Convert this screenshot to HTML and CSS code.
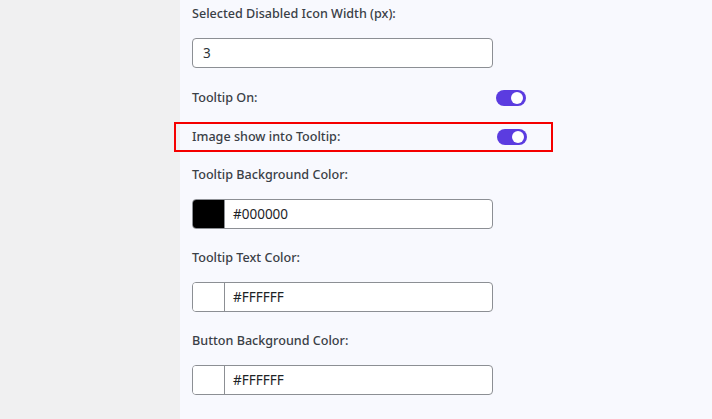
FILE: index.html
```html
<!DOCTYPE html>
<html>
<head>
<meta charset="utf-8">
<link rel="stylesheet" href="styles.css">
</head>
<body>
<div class="page">
  <aside class="side"></aside>
  <main class="panel">
    <div class="field">
      <div class="label">Selected Disabled Icon Width (px):</div>
      <div class="input"><span>3</span></div>
    </div>
    <div class="toggle-row first">
      <div class="label">Tooltip On:</div>
      <span class="toggle"><span class="knob"></span></span>
    </div>
    <div class="highlight">
      <div class="toggle-row">
        <div class="label">Image show into Tooltip:</div>
        <span class="toggle"><span class="knob"></span></span>
      </div>
    </div>
    <div class="field after-box">
      <div class="label">Tooltip Background Color:</div>
      <div class="input color"><span class="swatch black"></span><span class="val">#000000</span></div>
    </div>
    <div class="field">
      <div class="label">Tooltip Text Color:</div>
      <div class="input color"><span class="swatch"></span><span class="val">#FFFFFF</span></div>
    </div>
    <div class="field">
      <div class="label">Button Background Color:</div>
      <div class="input color"><span class="swatch"></span><span class="val">#FFFFFF</span></div>
    </div>
  </main>
</div>
</body>
</html>
```
FILE: styles.css
```css
* { box-sizing: border-box; }
html, body { margin: 0; padding: 0; }
body {
  font-family: "Noto Sans", "Open Sans", sans-serif;
  font-size: 13px;
  color: #3c434a;
  background: #f0f0f1;
}
.page { display: flex; height: 419px; overflow: hidden; }
.side { width: 180px; flex: none; background: #f0f0f1; }
.panel {
  flex: 1;
  background: #f8f9fe;
  padding: 4px 0 0 12px;
}
.label {
  line-height: 20px;
  height: 20px;
  white-space: nowrap;
  font-size: 12.6px;
  font-weight: 500;
  color: #3a4046;
}
.field { width: 301px; margin-bottom: 19px; }
.field .label { margin-bottom: 14px; }
.input {
  height: 30px;
  border: 1px solid #8c8f94;
  border-radius: 4px;
  background: #fff;
  display: flex;
  align-items: center;
  padding: 0 10px;
  color: #2c3338;
  font-size: 13.5px;
}
.input.color { padding: 0; overflow: hidden; }
.swatch {
  width: 32px;
  height: 100%;
  border-right: 1px solid #8c8f94;
  background: #fff;
  flex: none;
}
.swatch.black { background: #000; }
.val { padding-left: 8px; color: #1d2327; }
.field:first-child { margin-bottom: 20px; }
.toggle-row {
  width: 334px;
  display: flex;
  align-items: center;
  justify-content: space-between;
  height: 20px;
}
.toggle-row.first { margin-bottom: 14px; }
.highlight {
  margin-left: -18px;
  width: 379px;
  height: 30px;
  border: 2px solid #f50000;
  padding: 3px 0 0 16px;
}
.highlight .toggle-row { width: 335px; }
.toggle {
  width: 30px;
  height: 16px;
  border-radius: 8px;
  background: #5b3ce0;
  display: flex;
  align-items: center;
  justify-content: flex-end;
  padding-right: 3px;
}
.knob {
  width: 12px;
  height: 12px;
  border-radius: 50%;
  background: #fff;
}
.after-box { margin-top: 13px; }
```
